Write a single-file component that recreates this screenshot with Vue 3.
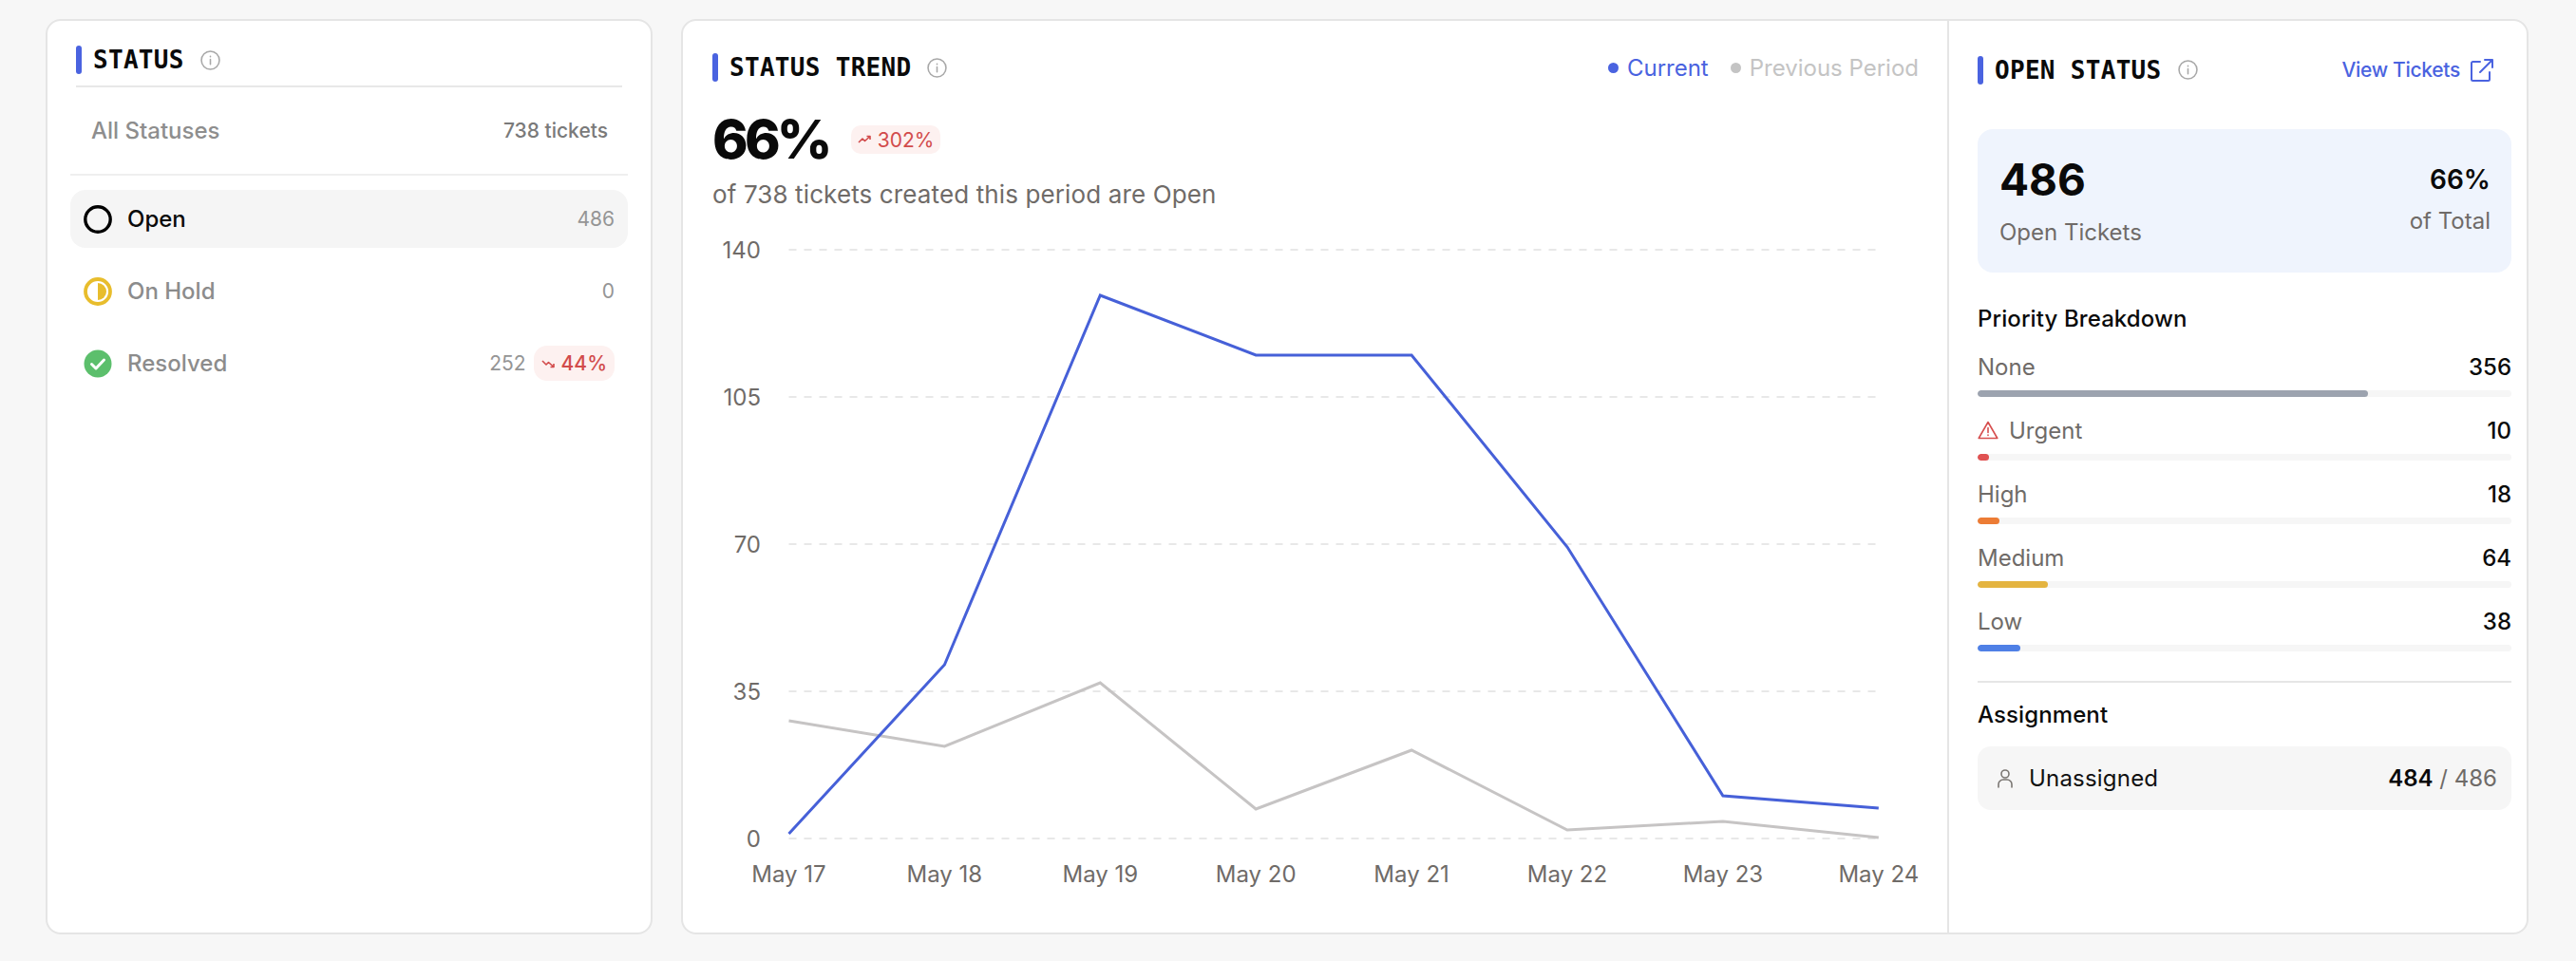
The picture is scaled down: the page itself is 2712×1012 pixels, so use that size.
<script setup>
const statuses = [
  { key: 'open', label: 'Open', count: 486, active: true },
  { key: 'hold', label: 'On Hold', count: 0 },
  { key: 'done', label: 'Resolved', count: 252, delta: '44%' },
]
const priorities = [
  { label: 'None', value: 356, fill: 411, color: '#9ca3af' },
  { label: 'Urgent', value: 10, fill: 12, color: '#e05252', warn: true },
  { label: 'High', value: 18, fill: 23, color: '#ec7c35' },
  { label: 'Medium', value: 64, fill: 74, color: '#e4b440' },
  { label: 'Low', value: 38, fill: 45, color: '#4f80e6' },
]
const ox = 751, oy = 250
const xs = Array.from({ length: 8 }, (_, i) => 831.5 + i * 163.9 - ox)
const gridY = [263, 418, 573, 728, 883].map((y) => y - oy)
const yLabels = ['140', '105', '70', '35', '0']
const dates = ['May 17', 'May 18', 'May 19', 'May 20', 'May 21', 'May 22', 'May 23', 'May 24']
const toPts = (a) => a.map((y, i) => `${xs[i]},${y - oy}`).join(' ')
const current = toPts([878, 700, 311, 374, 374, 576, 838, 851])
const previous = toPts([759, 786, 719, 852, 790, 874, 865, 882])
</script>

<template>
  <div class="page">
    <section class="card left">
      <header class="head head-left">
        <span class="bar"></span><h2>STATUS</h2>
        <svg class="info" viewBox="0 0 20 20"><circle cx="10" cy="10" r="9" /><path d="M10 9v5M10 6v.4" /></svg>
      </header>
      <div class="all"><span>All Statuses</span><small>738 tickets</small></div>
      <ul class="list">
        <li v-for="s in statuses" :key="s.key" :class="{ active: s.active }">
          <svg v-if="s.key === 'open'" class="sicon" viewBox="0 0 30 30"><circle cx="15" cy="15" r="13.200" fill="none" stroke="#000" stroke-width="3.400" /></svg>
          <svg v-else-if="s.key === 'hold'" class="sicon" viewBox="0 0 30 30"><circle cx="15" cy="15" r="13" fill="none" stroke="#e8bd2c" stroke-width="3.800" /><path d="M15 6a9 9 0 0 1 0 18z" fill="#e8bd2c" /></svg>
          <svg v-else class="sicon" viewBox="0 0 30 30"><circle cx="15" cy="15" r="14.500" fill="#5cbf6c" /><path d="M8.500 15.500l4.500 4.500 8.500-9" fill="none" stroke="#fff" stroke-width="3" stroke-linecap="round" stroke-linejoin="round" /></svg>
          <span class="name">{{ s.label }}</span>
          <span class="count">{{ s.count }}</span>
          <span v-if="s.delta" class="pill big">
            <svg viewBox="0 0 16 16"><path d="M1 5l4 4 2.500-2.500L13 11.500M13 8v3.500H9.500" /></svg>{{ s.delta }}
          </span>
        </li>
      </ul>
    </section>

    <section class="card main">
      <div class="trend">
        <header class="head trend-head">
          <span class="bar"></span><h2>STATUS TREND</h2>
          <svg class="info" viewBox="0 0 20 20"><circle cx="10" cy="10" r="9" /><path d="M10 9v5M10 6v.4" /></svg>
          <div class="legend">
            <span class="cur"><i></i>Current</span>
            <span class="prev"><i></i>Previous Period</span>
          </div>
        </header>
        <div class="headline">
          <strong>66%</strong>
          <span class="pill">
            <svg viewBox="0 0 16 16"><path d="M1 11l4-4 2.500 2.500L13 4.500M13 8V4.500H9.500" /></svg>302%
          </span>
        </div>
        <p class="sub">of 738 tickets created this period are Open</p>
        <svg class="chart" width="1300" height="700" viewBox="0 0 1300 700">
          <line v-for="y in gridY" :key="y" :x1="xs[0]" :x2="xs[7]" :y1="y" :y2="y" class="grid" />
          <text v-for="(t, i) in yLabels" :key="t" x="51" :y="gridY[i] + 9" text-anchor="end" class="tick">{{ t }}</text>
          <text v-for="(d, i) in dates" :key="d" :x="xs[i]" y="679" text-anchor="middle" class="tick">{{ d }}</text>
          <polyline :points="previous" class="line-prev" />
          <polyline :points="current" class="line-cur" />
        </svg>
      </div>

      <aside class="side">
        <header class="head side-head">
          <span class="bar"></span><h2>OPEN STATUS</h2>
          <svg class="info" viewBox="0 0 20 20"><circle cx="10" cy="10" r="9" /><path d="M10 9v5M10 6v.4" /></svg>
          <a class="view">View Tickets
            <svg viewBox="0 0 26 26"><path d="M11 4H3.500a1.500 1.500 0 0 0-1.500 1.500v17A1.500 1.500 0 0 0 3.500 24h16a1.500 1.500 0 0 0 1.500-1.500V15M16 2h8v8M24 2L11 15" /></svg>
          </a>
        </header>
        <div class="stat">
          <div><b>486</b><span>Open Tickets</span></div>
          <div class="stat-r"><em>66%</em><span>of Total</span></div>
        </div>
        <h3 class="pb">Priority Breakdown</h3>
        <div v-for="p in priorities" :key="p.label" class="prio">
          <div class="prio-row">
            <span class="plabel">
              <svg v-if="p.warn" viewBox="0 0 22 20"><path d="M11 1.500L1.200 18.500h19.600zM11 7.500v5M11 15v.4" /></svg>{{ p.label }}
            </span>
            <span class="pval">{{ p.value }}</span>
          </div>
          <div class="track"><div class="fill" :style="{ width: p.fill + 'px', background: p.color }"></div></div>
        </div>
        <hr />
        <h3 class="as">Assignment</h3>
        <div class="assign">
          <svg viewBox="0 0 18 22"><circle cx="9" cy="6" r="4" /><path d="M2 20v-3a5 5 0 0 1 5-5h4a5 5 0 0 1 5 5v3" /></svg>
          <span class="un">Unassigned</span>
          <span class="ratio"><b>484</b> / 486</span>
        </div>
      </aside>
    </section>
  </div>
</template>

<style>
body { margin: 0; background: #f7f7f7; }
</style>

<style scoped>
.page {
  box-sizing: border-box;
  height: 1012px;
  padding: 20px 50px 28px 48px;
  display: flex;
  gap: 30px;
  background: #f7f7f7;
  font-family: Inter, "Liberation Sans", sans-serif;
  color: #6f6b68;
}
.card {
  box-sizing: border-box;
  background: #fff;
  border: 2px solid #e5e5e5;
  border-radius: 16px;
}
.left { width: 640px; padding: 0 24px; }
.main { flex: 1; display: flex; }
.head { display: flex; align-items: center; }
.bar { width: 6px; height: 30px; border-radius: 3px; background: #4a63e0; flex: none; }
h2 {
  margin: 0 0 0 12px;
  font: 700 26px/30px "DejaVu Sans Mono", monospace;
  letter-spacing: .3px;
  color: #0a0a0a;
  white-space: pre;
}
.info { width: 21px; height: 21px; margin-left: 17px; fill: none; stroke: #a8a8a8; stroke-width: 1.5; stroke-linecap: round; flex: none; }
.head-left { margin: 26px 6px 0; height: 30px; padding-bottom: 12px; border-bottom: 2px solid #e8e8e8; }
.all {
  display: flex; justify-content: space-between; align-items: center;
  height: 91px; padding: 0 21px 0 22px;
  border-bottom: 2px solid #efefef;
  font-size: 24px; font-weight: 500; color: #8e8e8e;
}
.all small { font-size: 21px; color: #7a7a7a; }
.list { list-style: none; margin: 15px 0 0; padding: 0; display: flex; flex-direction: column; gap: 15px; }
.list li {
  display: flex; align-items: center; height: 61px; padding: 0 14px 0 14px;
  border-radius: 16px; font-size: 24px; font-weight: 500; color: #8c8c8c;
}
.list li.active { background: #f5f5f5; color: #0a0a0a; }
.sicon { width: 30px; height: 30px; flex: none; margin-right: 16px; }
.name { flex: 1; }
.count { font-size: 21px; font-weight: 400; color: #959595; }
.pill {
  display: inline-flex; align-items: center; gap: 5px;
  height: 30px; padding: 0 7px;
  border-radius: 10px; background: #fdf1f0; color: #d24b4b;
  font-size: 21px;
}
.pill svg { width: 16px; height: 16px; fill: none; stroke: currentColor; stroke-width: 1.6; stroke-linejoin: round; }
.pill.big { height: 37px; border-radius: 14px; margin-left: 8px; padding: 0 8px; font-weight: 500; }
.trend { flex: 1; min-width: 0; padding: 0 0 0 31px; }
.trend-head { margin-top: 34px; padding-right: 30px; }
.legend { margin-left: auto; display: flex; gap: 23px; font-size: 24px; }
.legend span { display: flex; align-items: center; gap: 9px; }
.legend i { width: 11px; height: 11px; border-radius: 50%; background: currentColor; }
.cur { color: #4a63e0; }
.prev { color: #c4c4c4; }
.headline { display: flex; align-items: center; gap: 23px; margin-top: 31px; height: 60px; }
.headline strong { font-size: 57px; font-weight: 800; line-height: 60px; color: #0a0a0a; letter-spacing: -3.800px; }
.sub { margin: 10px 0 0; font-size: 26px; line-height: 36px; letter-spacing: .12px; color: #6f6b68; }
.chart { display: block; margin-top: 27px; overflow: visible; }
.grid { stroke: #e8e8e8; stroke-width: 2; stroke-dasharray: 8 8; }
.tick { font-size: 24px; fill: #6f6b68; font-family: Inter, "Liberation Sans", sans-serif; }
.line-cur { fill: none; stroke: #4660d8; stroke-width: 3; }
.line-prev { fill: none; stroke: #c6c4c4; stroke-width: 3; }
.side { width: 610px; flex: none; box-sizing: border-box; border-left: 2px solid #e5e5e5; padding: 36px 16px 0 30px; }
.side-head { height: 31px; }
.view { margin-left: auto; margin-right: 18px; display: flex; align-items: center; gap: 10px; font-size: 21px; font-weight: 500; letter-spacing: -.3px; color: #4a63e0; }
.view svg { width: 26px; height: 26px; fill: none; stroke: currentColor; stroke-width: 2; stroke-linecap: round; stroke-linejoin: round; }
.stat {
  margin-top: 47px; height: 151px; box-sizing: border-box;
  padding: 0 22px 4px 23px; border-radius: 16px; background: #eff4fd;
  display: flex; justify-content: space-between; align-items: center;
}
.stat div { display: flex; flex-direction: column; }
.stat b { font-size: 46px; line-height: 56px; font-weight: 700; color: #0a0a0a; }
.stat span { font-size: 24px; margin-top: 13px; }
.stat-r { align-items: flex-end; }
.stat-r em { font-style: normal; font-size: 28px; line-height: 34px; font-weight: 600; color: #0a0a0a; margin-bottom: 0; }
.stat-r span { margin-top: 12px; }
h3 { margin: 0; font-size: 24px; line-height: 30px; font-weight: 500; letter-spacing: .1px; color: #0a0a0a; }
.pb { margin-top: 34px; margin-bottom: 17px; }
.prio { height: 67px; }
.prio-row { display: flex; justify-content: space-between; align-items: center; height: 36px; font-size: 24px; }
.plabel { display: flex; align-items: center; gap: 11px; }
.plabel svg { width: 22px; height: 20px; fill: none; stroke: #d64f4f; stroke-width: 1.6; stroke-linejoin: round; stroke-linecap: round; }
.pval { font-weight: 500; color: #0a0a0a; }
.track { height: 7px; margin-top: 7px; border-radius: 4px; background: #f6f6f6; overflow: hidden; }
.fill { height: 100%; border-radius: 4px; }
hr { border: 0; height: 2px; background: #e6e6e6; margin: 14px 0 19px; }
.assign {
  margin-top: 18px; height: 67px; border-radius: 14px; background: #f6f6f6;
  display: flex; align-items: center; padding: 0 15px 0 20px; font-size: 24px;
}
.assign svg { width: 18px; height: 22px; fill: none; stroke: #7a7672; stroke-width: 1.6; stroke-linecap: round; }
.un { flex: 1; margin-left: 16px; font-weight: 400; letter-spacing: .2px; color: #111; }
.ratio b { font-weight: 600; color: #0a0a0a; }
</style>
